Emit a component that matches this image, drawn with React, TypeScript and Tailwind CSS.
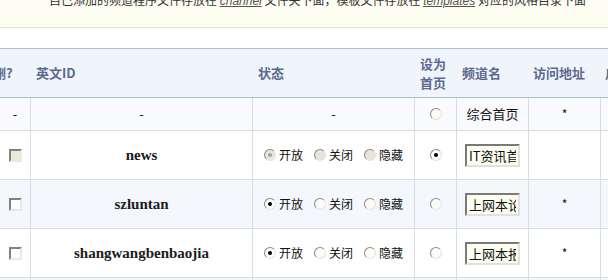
import React from "react";

type RadioProps = { checked?: boolean; disabled?: boolean };

function Radio({ checked, disabled }: RadioProps) {
  return (
    <span
      className={`inline-flex w-[12px] h-[12px] shrink-0 items-center justify-center rounded-full border border-t-[#8a8a8a] border-l-[#8a8a8a] border-b-[#e4e4e4] border-r-[#e4e4e4] ${
        disabled ? "bg-[#e8e6dc]" : "bg-[#fcfcf6]"
      }`}
    >
      {checked && (
        <span className={`w-[4px] h-[4px] rounded-full ${disabled ? "bg-[#a0a0a0]" : "bg-black"}`} />
      )}
    </span>
  );
}

function Checkbox({ disabled }: { disabled?: boolean }) {
  return (
    <span
      className={`inline-block w-[13px] h-[13px] border-2 border-t-[#808080] border-l-[#808080] border-b-[#e8e8e8] border-r-[#e8e8e8] ${
        disabled ? "bg-[#ece9d8]" : "bg-white"
      }`}
    />
  );
}

function StatusGroup({ value, disabled }: { value: number; disabled?: boolean }) {
  const labels = ["开放", "关闭", "隐藏"];
  return (
    <div className="flex items-center gap-[11px]">
      {labels.map((l, i) => (
        <label key={l} className="flex items-center gap-[3px] text-[12px] text-[#111]">
          <Radio checked={value === i} disabled={disabled} />
          <span>{l}</span>
        </label>
      ))}
    </div>
  );
}

const cell = "flex items-center justify-center border-r border-b border-[#d8dde4] overflow-hidden";
const cols = "grid grid-cols-[31px_222px_162px_42px_72px_72px_80px]";

const channels = [
  { id: "news", name: "IT资讯首页", status: 0, home: true, lock: true, bg: "bg-white" },
  { id: "szluntan", name: "上网本论坛", status: 0, home: false, lock: false, bg: "bg-[#f4f7fc]" },
  { id: "shangwangbenbaojia", name: "上网本报价", status: 0, home: false, lock: false, bg: "bg-white" },
];

export default function App() {
  return (
    <div className="w-[608px] h-[280px] overflow-hidden bg-white font-['Noto_Sans_CJK_SC',sans-serif]">
      {/* notice */}
      <div className="flex h-[28px] bg-[#fdfdf2] border-b border-[#e2e1d2] pl-[49px]">
        <p className="-mt-[6px] leading-[12px] text-[12px] text-[#333] whitespace-nowrap">
          自己添加的频道程序文件存放在{" "}
          <i className="underline font-['Liberation_Sans',sans-serif] text-[#555]">channel</i> 文件夹下面，模板文件存放在{" "}
          <i className="underline font-['Liberation_Sans',sans-serif] text-[#555]">templates</i> 对应的风格目录下面
        </p>
      </div>

      <div className="h-[20px]" />

      {/* header */}
      <div
        className={`${cols} h-[50px] bg-[#f0f5fc] border-t border-b border-[#a8bfcc] text-[13px] font-bold text-[#5d6a8e] w-[681px]`}
      >
        <div className="flex items-center pl-[5px]">
          <span className="-ml-[12px]">删?</span>
        </div>
        <div className="flex items-center pl-[5px]">英文ID</div>
        <div className="flex items-center pl-[5px]">状态</div>
        <div className="flex flex-col justify-center pl-[5px] leading-[19px]">
          <span>设为</span>
          <span>首页</span>
        </div>
        <div className="flex items-center pl-[5px]">频道名</div>
        <div className="flex items-center pl-[4px]">访问地址</div>
        <div className="flex items-center pl-[4px] whitespace-nowrap">启用</div>
      </div>

      {/* body */}
      <div className="w-[681px] text-[13px] text-[#111]">
        <div className={`${cols} h-[33px] bg-[#f8fafd]`}>
          <div className={cell}>-</div>
          <div className={cell}>-</div>
          <div className={cell}>-</div>
          <div className={cell}>
            <Radio />
          </div>
          <div className={cell}>综合首页</div>
          <div className={`${cell} text-[12px]`}>*</div>
          <div className={cell} />
        </div>

        {channels.map((c) => (
          <div key={c.id} className={`${cols} h-[49px] ${c.bg}`}>
            <div className={cell}>
              <Checkbox disabled={c.lock} />
            </div>
            <div className={`${cell} font-['Liberation_Serif',serif] font-bold text-[15px] text-[#1c1c1c]`}>
              {c.id}
            </div>
            <div className={cell}>
              <StatusGroup value={c.status} disabled={c.lock} />
            </div>
            <div className={cell}>
              <Radio checked={c.home} />
            </div>
            <div className={cell}>
              <input
                readOnly
                value={c.name}
                className="w-[55px] h-[23px] px-[2px] bg-[#fdfdf0] border-2 border-t-[#7a7a7a] border-l-[#7a7a7a] border-b-[#e0e0e0] border-r-[#e0e0e0] text-[13px] text-[#111] outline-none"
              />
            </div>
            <div className={`${cell} text-[12px]`}>{c.home ? "" : "*"}</div>
            <div className={cell} />
          </div>
        ))}

        <div className={`${cols} h-[49px] bg-[#f4f7fc]`}>
          <div className={cell} />
          <div className={cell} />
          <div className={cell} />
          <div className={cell} />
          <div className={cell} />
          <div className={cell} />
          <div className={cell} />
        </div>
      </div>
    </div>
  );
}
